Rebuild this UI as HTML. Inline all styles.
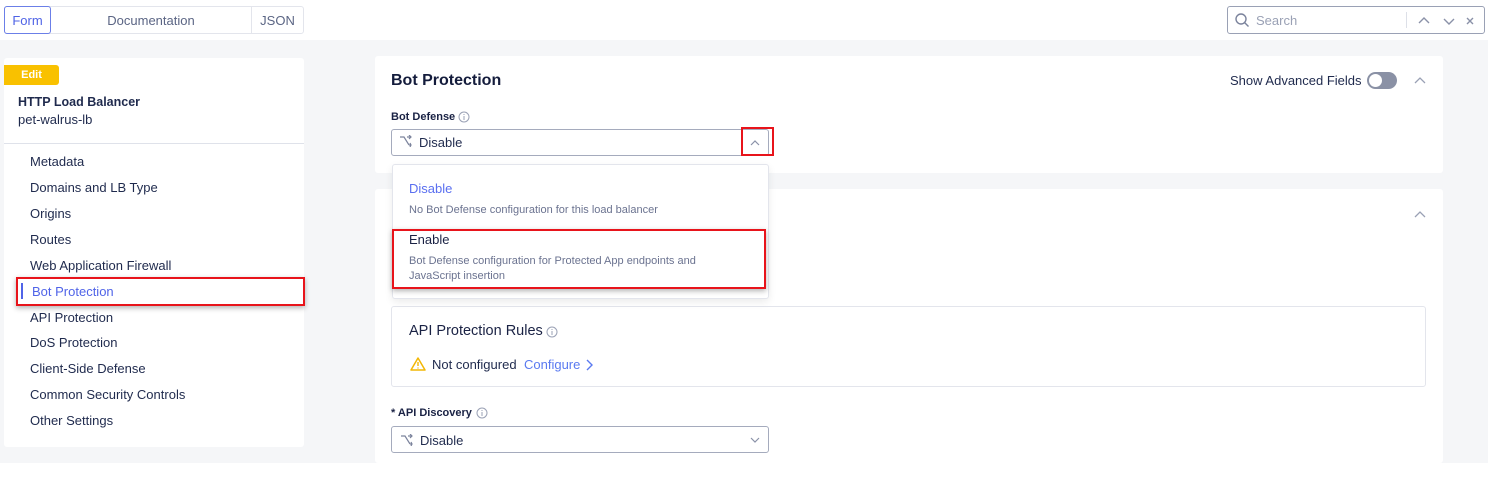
<!DOCTYPE html>
<html><head><meta charset="utf-8"><style>
*{box-sizing:border-box;margin:0;padding:0}
body{width:1490px;height:479px;background:#fff;font-family:"Liberation Sans",sans-serif;color:#1f2a4d;position:relative;overflow:hidden;font-size:13px}
.abs{position:absolute}
.gray{left:0;top:40px;width:1488px;height:423px;background:#f5f6f8}
.tabs{left:4px;top:6px;width:300px;height:28px;border:1px solid #e3e5ec;border-radius:3px;display:flex;font-size:13px;color:#5b6584;background:#fff}
.tabs div{display:flex;align-items:center;justify-content:center;border-right:1px solid #e3e5ec}
.search{left:1227px;top:6px;width:258px;height:28px;border:1px solid #9aa1b5;border-radius:3px;background:#fff}
.card{background:#fff;border-radius:3px}
.nav div{position:absolute;left:30px;font-size:13px;color:#1f2a4d}
.red{position:absolute;border:2px solid #e8141b;box-shadow:0 2px 5px rgba(0,0,0,.3)}
.sel{border:1px solid #a5abbd;border-radius:3px;background:#fff}
.lbl{font-size:11px;font-weight:bold;color:#1a2244}
</style></head><body>
<div class="abs gray"></div>
<div class="abs tabs">
 <div style="width:47px;border:1px solid #6b7fe8;color:#4f63e6;margin:-1px 0 -1px -1px;border-radius:3px">Form</div>
 <div style="width:201px">Documentation</div>
 <div style="flex:1;border-right:none">JSON</div>
</div>
<div class="abs search">
 <svg class="abs" style="left:6px;top:5px" width="16" height="16" viewBox="0 0 16 16"><circle cx="7" cy="7" r="5" fill="none" stroke="#7b839c" stroke-width="1.4"/><path d="M10.5 10.5l4 4" stroke="#7b839c" stroke-width="1.4"/></svg>
 <span class="abs" style="left:28px;top:6px;color:#9aa1b5;font-size:13px">Search</span>
 <div class="abs" style="left:178px;top:5px;width:1px;height:16px;background:#dde0e8"></div>
 <svg class="abs" style="left:188px;top:8px" width="70" height="12" viewBox="0 0 70 12"><path d="M3 8l5-5 5 5M28 4l5 5 5-5M51 3l6 6M57 3l-6 6" fill="none" stroke="#8a91a8" stroke-width="1.4"/></svg>
</div>

<div class="abs card" style="left:4px;top:58px;width:300px;height:389px">
 <div class="abs" style="left:0;top:7px;width:55px;height:20px;background:#f9c100;border-radius:0 3px 3px 0;color:#fff;font-weight:bold;font-size:11px;text-align:center;line-height:20px">Edit</div>
 <div class="abs" style="left:14px;top:37px;font-weight:bold;font-size:12.5px">HTTP Load Balancer</div>
 <div class="abs" style="left:14px;top:54px;font-size:13px">pet-walrus-lb</div>
 <div class="abs" style="left:0;top:85px;width:300px;height:1px;background:#dfe2ea"></div>
</div>
<div class="nav">
 <div style="top:154px">Metadata</div>
 <div style="top:180px">Domains and LB Type</div>
 <div style="top:206px">Origins</div>
 <div style="top:232px">Routes</div>
 <div style="top:258px">Web Application Firewall</div>
 <div style="top:284px;left:32px;color:#5064e8">Bot Protection</div>
 <div style="top:310px">API Protection</div>
 <div style="top:335px">DoS Protection</div>
 <div style="top:361px">Client-Side Defense</div>
 <div style="top:387px">Common Security Controls</div>
 <div style="top:413px">Other Settings</div>
</div>
<div class="abs" style="left:21px;top:283px;width:2px;height:16px;background:#5064e8"></div>
<div class="red" style="left:16px;top:277px;width:289px;height:29px"></div>

<div class="abs card" style="left:375px;top:56px;width:1068px;height:117px">
 <div class="abs" style="left:16px;top:16px;font-size:16px;font-weight:bold;color:#141c3c">Bot Protection</div>
 <div class="abs" style="left:855px;top:17px;font-size:13px">Show Advanced Fields</div>
 <div class="abs" style="left:992px;top:16px;width:30px;height:17px;border-radius:9px;background:#8a91a5"><div class="abs" style="left:2px;top:2px;width:13px;height:13px;border-radius:50%;background:#fff"></div></div>
 <svg class="abs" style="left:1039px;top:20px" width="12" height="8"><path d="M1 7l5-5 5 5" fill="none" stroke="#9aa1b5" stroke-width="1.3"/></svg>
 <div class="abs lbl" style="left:16px;top:55px">Bot Defense</div>
 <svg class="abs" style="left:83px;top:55px" width="12" height="12"><circle cx="6" cy="6" r="5" fill="none" stroke="#9aa1b5"/><path d="M6 5v4M6 3v1" stroke="#9aa1b5"/></svg>
 <div class="abs sel" style="left:16px;top:73px;width:378px;height:27px"></div>
</div>
<div class="abs card" style="left:375px;top:189px;width:1068px;height:274px">
 <svg class="abs" style="left:1039px;top:21px" width="12" height="8"><path d="M1 7l5-5 5 5" fill="none" stroke="#9aa1b5" stroke-width="1.3"/></svg>
 <div class="abs" style="left:16px;top:117px;width:1035px;height:81px;border:1px solid #e3e5ec;border-radius:3px">
  <div class="abs" style="left:17px;top:16px;font-size:14.5px;color:#1a2244">API Protection Rules</div>
  <svg class="abs" style="left:154px;top:19px" width="12" height="12"><circle cx="6" cy="6" r="5" fill="none" stroke="#9aa1b5"/><path d="M6 5v4M6 3v1" stroke="#9aa1b5"/></svg>
  <svg class="abs" style="left:18px;top:50px" width="16" height="14"><path d="M8 1L15 13H1Z" fill="none" stroke="#f2b705" stroke-width="1.5" stroke-linejoin="round"/><path d="M8 5v4M8 10.5v1" stroke="#f2b705" stroke-width="1.4"/></svg>
  <div class="abs" style="left:40px;top:50px;font-size:13px">Not configured</div>
  <div class="abs" style="left:132px;top:50px;font-size:13px;color:#5a7af0">Configure</div>
  <svg class="abs" style="left:193px;top:52px" width="8" height="12"><path d="M2 1l5 5-5 5" fill="none" stroke="#5a7af0" stroke-width="1.4"/></svg>
 </div>
 <div class="abs lbl" style="left:16px;top:218px">* API Discovery</div>
 <svg class="abs" style="left:101px;top:218px" width="12" height="12"><circle cx="6" cy="6" r="5" fill="none" stroke="#9aa1b5"/><path d="M6 5v4M6 3v1" stroke="#9aa1b5"/></svg>
 <div class="abs sel" style="left:16px;top:237px;width:378px;height:27px">
  <svg class="abs" style="left:8px;top:7px" width="14" height="12"><path d="M1 2h4l5 8M8 2h4M10 0l2 2-2 2M12 10l-2 0M11 8l1 2-1 2" fill="none" stroke="#7b839c" stroke-width="1.2"/></svg>
  <div class="abs" style="left:28px;top:6px;font-size:13px">Disable</div>
  <svg class="abs" style="left:358px;top:10px" width="10" height="7"><path d="M1 1l4 4 4-4" fill="none" stroke="#8a91a8" stroke-width="1.2"/></svg>
 </div>
</div>

<svg class="abs" style="left:399px;top:135px" width="14" height="12"><path d="M1 2h4l5 8M8 2h4M10 0l2 2-2 2M12 10l-2 0M11 8l1 2-1 2" fill="none" stroke="#7b839c" stroke-width="1.2"/></svg>
<div class="abs" style="left:419px;top:135px;font-size:13px">Disable</div>
<svg class="abs" style="left:750px;top:139px" width="10" height="7"><path d="M1 6l4-4 4 4" fill="none" stroke="#8a91a8" stroke-width="1.2"/></svg>
<div class="red" style="left:741px;top:127px;width:33px;height:29px;box-shadow:none"></div>

<div class="abs" style="left:392px;top:164px;width:377px;height:135px;background:#fff;border:1px solid #e3e5ec;border-radius:3px;box-shadow:0 3px 8px rgba(0,0,0,.08)">
 <div class="abs" style="left:16px;top:16px;font-size:13px;color:#5a6ff0">Disable</div>
 <div class="abs" style="left:16px;top:39px;font-size:11px;color:#6b7390">No Bot Defense configuration for this load balancer</div>
 <div class="abs" style="left:16px;top:67px;font-size:13px;color:#1a2244">Enable</div>
 <div class="abs" style="left:16px;top:89px;font-size:11px;color:#6b7390;line-height:15px">Bot Defense configuration for Protected App endpoints and<br>JavaScript insertion</div>
</div>
<div class="red" style="left:392px;top:229px;width:374px;height:60px"></div>
</body></html>
